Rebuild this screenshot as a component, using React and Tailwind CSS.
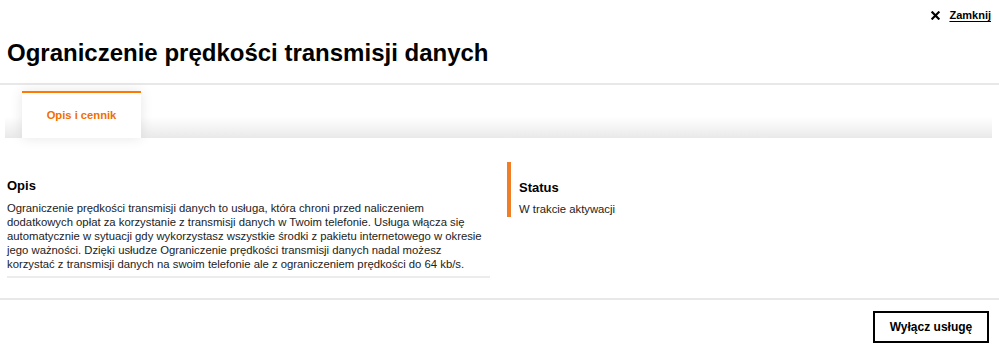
import React from "react"

const font = { fontFamily: '"Liberation Sans", Arial, Helvetica, sans-serif' }

const CloseIcon = () => (
  <svg width="9" height="9" viewBox="0 0 10 10" className="mr-[9px]">
    <path d="M1.5 1.5 L8.5 8.5 M8.5 1.5 L1.5 8.5" stroke="#000" strokeWidth="2.4" strokeLinecap="square" />
  </svg>
)

const App = () => {
  return (
    <div className="w-[999px] h-[352px] bg-white text-black overflow-hidden" style={font}>
      {/* top bar */}
      <div className="flex justify-end pt-[8px] pr-[8px] h-[22px]">
        <button className="flex items-center text-[11px] font-bold leading-[14px]">
          <CloseIcon />
          <span className="underline underline-offset-2">Zamknij</span>
        </button>
      </div>

      <h1 className="pl-[7px] mt-[16px] text-[24px] font-bold leading-[30px]">
        Ograniczenie prędkości transmisji danych
      </h1>

      <div className="mt-[15px] h-[2px] bg-[#e8e8e8]" />

      {/* tabs */}
      <div className="ml-[5px] mr-[7px] h-[53px] bg-linear-to-b from-white from-60% to-[#e9e9e9] flex items-end pl-[17px]">
        <div className="w-[119px] h-[47px] bg-white border-t-2 border-[#ff7900] flex items-center justify-center shadow-[0_0_12px_rgba(0,0,0,0.1)]">
          <span className="text-[11.2px] font-bold text-[#f16e00] pb-[1px]">Opis i cennik</span>
        </div>
      </div>

      {/* content */}
      <div className="flex pt-[24px] h-[160px]">
        <div className="w-[483px] ml-[7px]">
          <h2 className="text-[13px] font-bold leading-[16px] mt-[16px]">Opis</h2>
          <p className="mt-[7px] text-[11.3px] leading-[14px] text-[#222] pb-[5px] border-b-2 border-[#ececec]">
            Ograniczenie prędkości transmisji danych to usługa, która chroni przed naliczeniem dodatkowych opłat za
            korzystanie z transmisji danych w Twoim telefonie. Usługa włącza się automatycznie w sytuacji gdy
            wykorzystasz wszystkie środki z pakietu internetowego w okresie jego ważności. Dzięki usłudze Ograniczenie
            prędkości transmisji danych nadal możesz korzystać z transmisji danych na swoim telefonie ale z
            ograniczeniem prędkości do 64 kb/s.
          </p>
        </div>
        <div className="ml-[17px]">
          <div className="border-l-4 border-[#f07e26] pl-[8px] h-[55px] pt-[18px]">
            <h2 className="text-[13px] font-bold leading-[16px]">Status</h2>
            <p className="mt-[6px] text-[11.3px] leading-[14px] text-[#222]">W trakcie aktywacji</p>
          </div>
        </div>
      </div>

      <div className="h-[2px] bg-[#e8e8e8]" />

      <div className="flex justify-end pr-[10px] pt-[11px]">
        <button className="w-[116px] h-[32px] border-2 border-black text-[12px] font-bold">
          Wyłącz usługę
        </button>
      </div>
    </div>
  )
}

export default App
